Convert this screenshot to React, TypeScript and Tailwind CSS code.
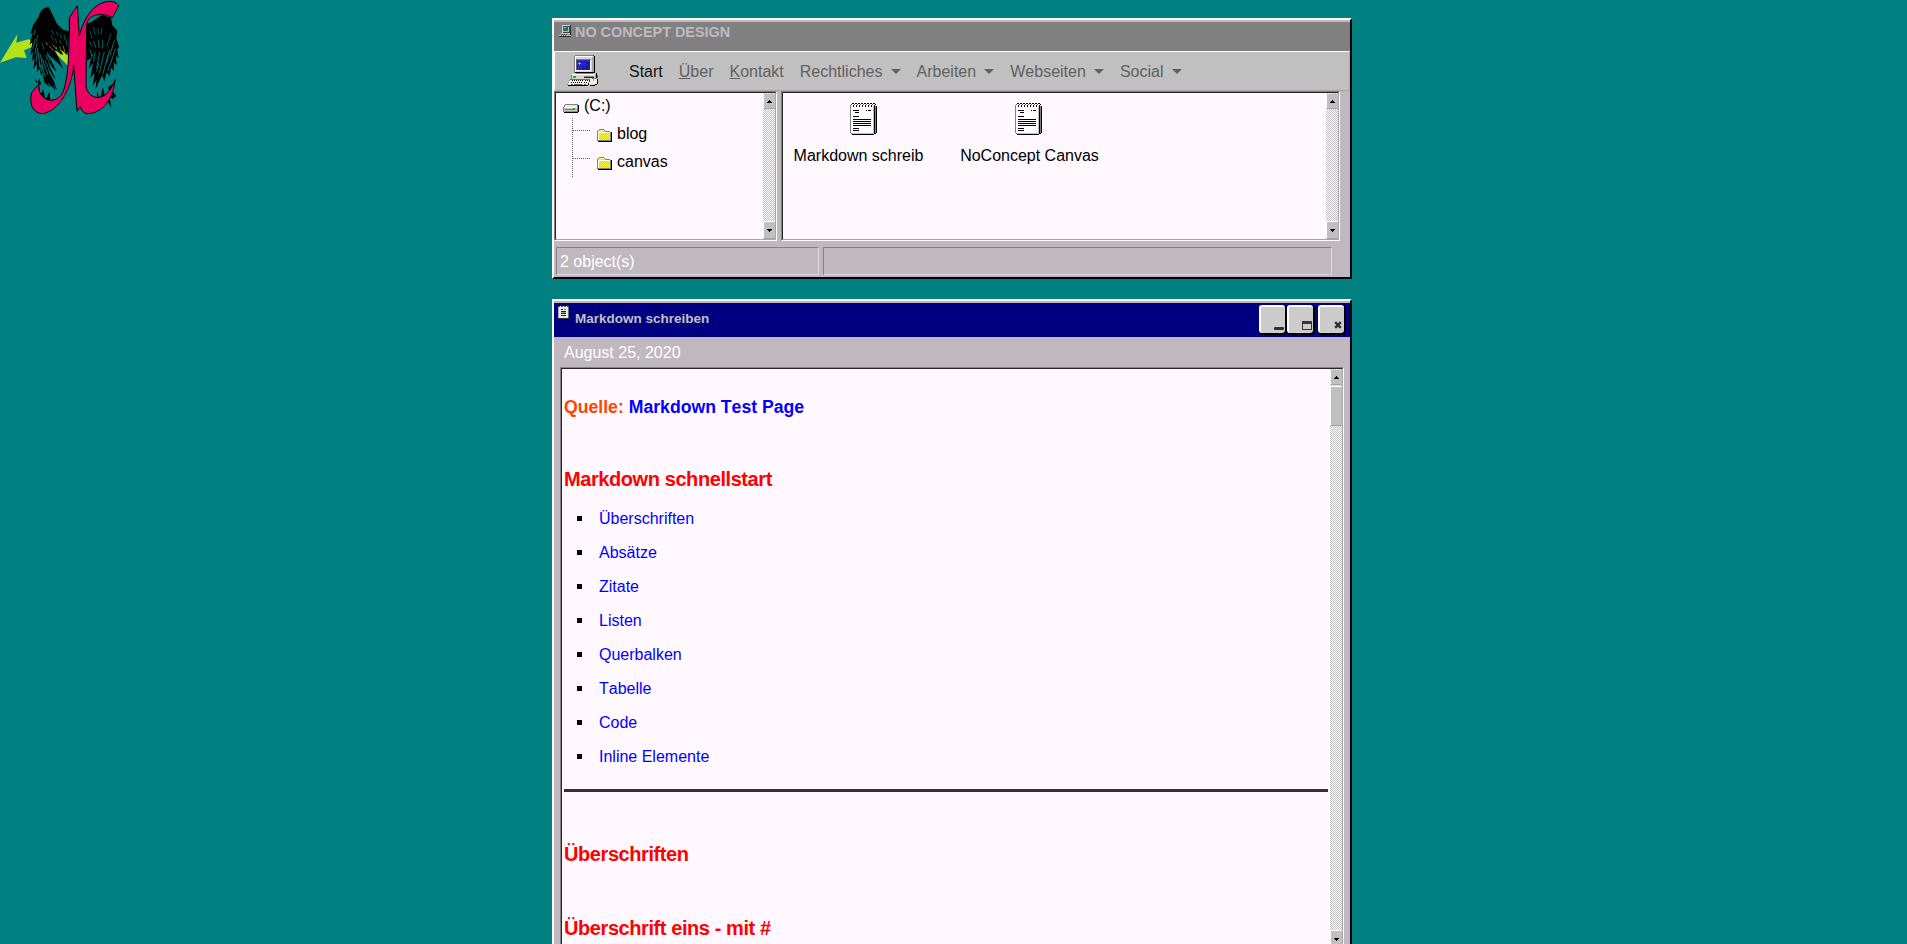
import React from "react";

type Px = [number, number, number, number, string];

function Pixels({ w, h, data, className = "" }: { w: number; h: number; data: Px[]; className?: string }) {
  return (
    <svg width={w} height={h} viewBox={`0 0 ${w} ${h}`} shapeRendering="crispEdges" className={`block shrink-0 ${className}`}>
      {data.map(([x, y, rw, rh, c], i) => (
        <rect key={i} x={x} y={y} width={rw} height={rh} fill={c} />
      ))}
    </svg>
  );
}

const computer: Px[] = [
  [8, 0, 19, 1, "#808080"], [7, 1, 1, 17, "#808080"], [27, 1, 1, 17, "#000"], [26, 0, 1, 1, "#404040"],
  [8, 17, 19, 1, "#000"], [8, 1, 18, 16, "#d8d8c8"], [8, 1, 17, 1, "#fff"], [8, 1, 1, 16, "#fff"],
  [25, 2, 2, 15, "#a8a898"], [9, 4, 15, 1, "#808080"], [9, 4, 1, 11, "#606060"], [10, 5, 13, 10, "#2424cc"],
  [19, 7, 4, 8, "#1c1ca0"], [15, 11, 8, 4, "#1c1ca0"], [10, 15, 14, 1, "#fff"], [23, 5, 1, 11, "#fff"],
  [12, 7, 1, 3, "#4090ff"], [11, 8, 3, 1, "#4090ff"], [12, 8, 1, 1, "#fff"],
  [20, 6, 1, 1, "#2424cc"], [20, 9, 1, 1, "#2424cc"], [17, 12, 1, 1, "#2424cc"], [19, 13, 1, 1, "#2424cc"],
  [9, 18, 17, 1, "#808080"], [5, 19, 24, 1, "#fff"], [5, 20, 25, 4, "#d8d8c8"], [4, 20, 1, 5, "#808080"],
  [6, 21, 3, 2, "#00c820"], [17, 21, 10, 1, "#909088"], [17, 22, 10, 1, "#202020"], [29, 18, 1, 7, "#000"], [28, 19, 1, 5, "#a8a898"],
  [3, 24, 21, 1, "#707068"], [2, 25, 21, 2, "#f0f0e0"], [1, 27, 21, 2, "#f0f0e0"], [0, 29, 21, 1, "#d8d8c8"], [1, 30, 20, 1, "#000"],
  [2, 25, 1, 1, "#808080"], [1, 27, 1, 1, "#808080"], [0, 29, 1, 1, "#808080"], [22, 25, 1, 4, "#303030"], [21, 28, 1, 2, "#000"],
  [5, 25, 1, 1, "#000"], [7, 25, 1, 1, "#000"], [9, 25, 1, 1, "#000"], [11, 25, 1, 1, "#000"], [13, 25, 1, 1, "#000"], [15, 25, 1, 1, "#000"], [18, 25, 1, 1, "#000"], [20, 25, 1, 1, "#000"],
  [4, 27, 1, 1, "#000"], [6, 27, 1, 1, "#000"], [8, 27, 1, 1, "#000"], [10, 27, 1, 1, "#000"], [12, 27, 1, 1, "#000"], [14, 27, 1, 1, "#000"], [17, 27, 1, 1, "#000"], [19, 27, 1, 1, "#000"],
  [4, 29, 2, 1, "#606060"], [7, 29, 8, 1, "#606060"], [17, 29, 2, 1, "#606060"],
  [25, 23, 5, 1, "#808080"], [23, 24, 7, 3, "#f0f0e0"], [22, 27, 8, 2, "#f0f0e0"], [22, 29, 6, 1, "#d8d8c8"],
  [30, 24, 1, 4, "#000"], [30, 28, 1, 1, "#000"], [28, 29, 2, 1, "#000"], [23, 30, 5, 1, "#000"], [26, 24, 1, 2, "#a8a898"], [30, 20, 1, 3, "#606060"],
];

const miniComputer: Px[] = [
  [3, 0, 8, 1, "#c8c8c8"], [3, 1, 1, 7, "#d0d0d0"], [4, 1, 6, 6, "#b8b8b0"], [10, 1, 1, 6, "#505050"], [11, 0, 1, 8, "#303030"],
  [4, 1, 6, 1, "#505858"], [5, 2, 4, 4, "#207070"], [4, 2, 1, 4, "#606868"], [5, 2, 2, 1, "#70a8a8"], [4, 7, 7, 1, "#404040"],
  [2, 8, 9, 1, "#c8c8c0"], [11, 7, 1, 3, "#202020"], [1, 9, 10, 1, "#989890"], [3, 9, 1, 1, "#303030"], [5, 9, 1, 1, "#303030"], [7, 9, 1, 1, "#303030"],
  [0, 10, 9, 1, "#c8c8c0"], [9, 10, 3, 1, "#b0b0a8"], [2, 10, 1, 1, "#505050"], [4, 10, 1, 1, "#505050"], [6, 10, 1, 1, "#505050"], [0, 11, 12, 1, "#303030"],
];

const drive: Px[] = [
  [2, 0, 13, 1, "#808080"], [1, 1, 1, 2, "#808080"], [2, 1, 12, 2, "#e8e8e8"], [0, 3, 1, 5, "#808080"], [1, 3, 13, 1, "#fff"],
  [1, 4, 13, 4, "#c0c0c0"], [14, 1, 1, 7, "#808080"], [15, 1, 1, 7, "#000"], [2, 5, 10, 1, "#808080"], [10, 4, 2, 1, "#00a000"],
  [1, 8, 14, 1, "#000"], [2, 7, 12, 1, "#909090"],
];

const folder: Px[] = [
  [2, 0, 5, 1, "#808080"], [1, 1, 1, 1, "#808080"], [7, 1, 1, 1, "#808080"], [2, 1, 5, 1, "#ffff60"], [0, 2, 1, 10, "#808080"],
  [8, 2, 5, 1, "#808080"], [1, 2, 7, 1, "#e8e840"], [1, 3, 12, 1, "#fff"], [1, 4, 1, 7, "#fff"], [2, 4, 11, 7, "#f2f22c"],
  [13, 3, 1, 9, "#808080"], [14, 3, 1, 9, "#000"], [1, 11, 13, 1, "#808080"], [1, 12, 14, 1, "#000"],
  ...Array.from({ length: 35 }, (_, i): Px => [3 + (i % 5) * 2 - (Math.floor(i / 5) % 2), 4 + Math.floor(i / 5), 1, 1, "#d4d470"]),
];

const notepad: Px[] = [
  [1, 1, 23, 30, "#fff"], [0, 2, 1, 28, "#808080"], [1, 1, 1, 1, "#808080"], [1, 30, 1, 1, "#606060"], [2, 31, 22, 1, "#000"],
  [2, 30, 22, 1, "#c0c0c0"], [23, 3, 1, 27, "#c0c0c0"], [24, 2, 1, 29, "#000"], [25, 3, 1, 27, "#808080"], [26, 3, 1, 27, "#000"], [25, 30, 1, 1, "#000"], [25, 1, 1, 1, "#000"],
  ...Array.from({ length: 8 }, (_, i): Px => [2 + i * 3, 0, 2, 1, "#000"]),
  ...Array.from({ length: 8 }, (_, i): Px => [1 + i * 3, 1, 1, 1, "#606060"]),
  ...Array.from({ length: 7 }, (_, i): Px => [3 + i * 3, 2, 1, 2, "#000"]),
  [3, 7, 6, 1, "#000"], [16, 7, 1, 1, "#000"], [18, 7, 3, 1, "#000"], [5, 9, 4, 1, "#000"], [3, 13, 6, 1, "#000"],
  [3, 16, 18, 1, "#000"], [3, 18, 18, 1, "#000"], [3, 20, 18, 1, "#000"], [3, 22, 18, 1, "#000"], [3, 25, 6, 1, "#000"], [3, 27, 6, 1, "#000"],
];

const miniNotepad: Px[] = [
  [0, 1, 11, 11, "#e8e8e8"], [0, 0, 11, 1, "#505058"], [2, 0, 1, 2, "#fff"], [5, 0, 1, 2, "#fff"], [8, 0, 1, 2, "#fff"],
  [0, 1, 1, 11, "#b0b0b0"], [10, 1, 1, 11, "#707070"], [0, 12, 11, 1, "#303040"],
  [3, 3, 2, 1, "#404040"], [6, 3, 2, 1, "#808080"], [3, 5, 5, 1, "#202020"], [3, 7, 5, 1, "#202020"], [3, 9, 5, 1, "#202020"], [3, 6, 5, 1, "#a0a0a0"],
];

function Logo() {
  return (
    <svg width="130" height="120" viewBox="0 0 390 360" className="pointer-events-none absolute left-0 top-0">
      <defs>
        <filter id="soft"><feGaussianBlur stdDeviation="2" /></filter>
      </defs>
      <path d="M0 188L52 103L49 128L85 118L112 128L200 142L205 195L181 174L155 140L112 135L72 151L80 174L48 172Z" fill="#b5e01f" filter="url(#soft)" />
      <path d="M147 22C132 20 121 32 116 50L99 76L91 102L98 98L89 134L97 127L91 166L99 156L96 184L104 174L100 207L110 192L112 217L118 205L124 229L128 216L139 242L141 228L171 271L160 240L142 208L168 240L145 190L170 216L148 166L174 190L190 207L174 170L163 151L176 157L193 176L184 149L201 165L205 148L207 94L189 89L171 72L158 44Z" />
      <path d="M170 162L203 165L204 198L190 183Z" fill="#b5e01f" />
      <path d="M128 225L134 248L152 263L141 246L168 272L158 252L147 231ZM105 236l9 11l4-12l6 19l-8-4l-8-4zM117 254l4 31l9-18l6 34l12-25l3 25l-20-2l-14-17z" />
      <g stroke="#008080" strokeWidth="2.6" fill="none">
        <path d="M101 105l5-17M98 146l8-30M104 163l7-35M108 187l5-43M119 202l-4-47M130 211l-9-48M144 225l-18-50M156 229l-21-48M157 208l-20-44M160 193l-19-37M137 230l-15-36M125 215l-7-30M151 181l-9-20" />
        <path strokeWidth="2" d="M168 94l7 13M180 101l5 15M192 104l3 16M155 89l6 15M165 115l5 13M179 119l4 12M152 105l8 13M198 118l3 20M113 105l-4 19M126 128l6 21" />
      </g>
      <g stroke="#b5e01f" strokeWidth="1.6" fill="none">
        <path d="M147 138l14 14M157 134l12 13M172 152l-4-12M184 157l-5-18M195 157l-6-20M138 126l5 9" />
      </g>
      <path d="M260 72L275 65L306 45L333 53L337 76L352 92L349 115L357 140L352 150L356 174L348 169L350 196L341 187L342 213L333 203L329 229L320 217L313 244L306 226L286 269L290 239L278 258L284 218L271 235L279 190L266 206L273 174L261 182Z" />
      <path d="M290 270l9 29l10-38l8 40l10-19l7 41l-15-25l-26 6zM325 260l20-12l-8 24l12 16l-12 10l-9-14z" />
      <g stroke="#008080" strokeWidth="2.6" fill="none">
        <path d="M268 125l10 14M280 123l8 20M294 119l4 25M308 121l0 24M269 148l7 20M285 155l-4 30M299 156l-9 48M313 155l-15 64M324 165l-16 59M335 181l-12 32M346 147l-13 39M343 122l-13 43M274 176l5-14M290 215l6-26M329 150l-9 40" />
        <path strokeWidth="2" d="M270 92l6 24M281 80l4 25M294 84l1 20M306 82l-3 22M333 101l-13 40" />
      </g>
      <path d="M208 53L232 17L238 108C251 52 285 4 331 4Q348 4 356 18L337 53C316 40 266 36 260 73L258 255C260 296 316 319 345 239C342 290 311 343 258 341Q247 337 240 320L231 334L221 197C218 240 191 329 128 341C93 338 88 305 95 278L117 251C108 303 176 323 192 267C205 228 206 163 208 102Z" fill="#ea0060" stroke="#000" strokeWidth="3" strokeLinejoin="round" />
    </svg>
  );
}

function ScrollButton({ dir, className = "" }: { dir: "up" | "down"; className?: string }) {
  return (
    <div className={`flex shrink-0 justify-center border-b border-l border-b-[#a4a4a4] border-l-white bg-[#c0c0c0] ${className}`}>
      <svg width="5" height="4" viewBox="0 0 5 4" shapeRendering="crispEdges" className="block">
        {dir === "up" ? (
          <path d="M2 0h1v1h1v1h1v1H0V2h1V1h1z" />
        ) : (
          <path d="M0 0h5v1H4v1H3v1H2V2H1V1H0z" />
        )}
      </svg>
    </div>
  );
}

const track =
  "flex w-3 shrink-0 flex-col bg-[repeating-conic-gradient(#c0c0c0_0_25%,#ffffff_0_50%)] bg-[length:2px_2px]";

function Panel({ className, children }: { className: string; children: React.ReactNode }) {
  return (
    <div className={`border border-b-white border-l-[#848084] border-r-white border-t-[#848084] ${className}`}>
      <div className="flex h-full border border-b-[#a8a4a8] border-l-[#282428] border-r-[#a8a4a8] border-t-[#282428] bg-[#fff8ff]">
        {children}
      </div>
    </div>
  );
}

function SmallScroll() {
  return (
    <div className={track}>
      <ScrollButton dir="up" className="mt-px h-[15px] pt-[6px]" />
      <div className="flex-1" />
      <ScrollButton dir="down" className="h-[18px] border-t border-t-white pt-[7px]" />
    </div>
  );
}

function Menu({ label }: { label: string }) {
  return (
    <span className="flex items-center whitespace-pre px-2">
      {label}
      <span className="ml-[8.1px] mt-[-2px] h-0 w-0 border-x-[5px] border-t-[5px] border-x-transparent border-t-[#606060]" />
    </span>
  );
}

function TreeRow({ label }: { label: string }) {
  return (
    <div className="flex h-7">
      <div className="mt-[12px] h-px w-[18px] bg-[repeating-linear-gradient(90deg,#606060_0_1px,transparent_1px_2px)]" />
      <Pixels w={15} h={13} data={folder} className="ml-[6px] mt-[11px]" />
      <span className="ml-[5px] mt-[4px] leading-6">{label}</span>
    </div>
  );
}

function FileItem({ label, labelClass }: { label: string; labelClass: string }) {
  return (
    <div className="flex w-[165px] flex-col items-center">
      <Pixels w={27} h={32} data={notepad} />
      <span className={`mt-[9px] leading-6 ${labelClass}`}>{label}</span>
    </div>
  );
}

function TitleButton({ className = "", children }: { className?: string; children: React.ReactNode }) {
  return (
    <div className={`flex h-[30px] w-7 rounded-[4px] bg-black pb-[2px] pr-[2px] ${className}`}>
      <div className="flex h-full w-full items-end justify-end rounded-[3px] border-l-2 border-t-2 border-white bg-[#cccccc]">
        {children}
      </div>
    </div>
  );
}

const windowFrame =
  "w-[800px] border-2 border-b-black border-l-white border-r-black border-t-white bg-[#c0b8bf]";

const heading = "text-[20px] font-bold leading-6 tracking-[-0.42px] text-[#ff0000]";

const links = ["Überschriften", "Absätze", "Zitate", "Listen", "Querbalken", "Tabelle", "Code", "Inline Elemente"];

export default function App() {
  return (
    <div className="relative h-[944px] w-full overflow-hidden bg-[#008080] pl-[552px] pt-[18px] font-['Liberation_Sans',Arial,sans-serif] text-base text-black [font-kerning:none]">
      <Logo />

      <section className={`${windowFrame} h-[261px]`}>
        <header className="mt-[2px] flex h-[29px] bg-[#808080]">
          <Pixels w={13} h={12} data={miniComputer} className="ml-[5px] mt-[3px]" />
          <h1 className="ml-[3px] mt-[-2px] text-[14.4px] font-bold leading-6 text-[#c0b8c0]">NO CONCEPT DESIGN</h1>
        </header>
        <nav className="flex h-10 items-center border border-b-[#a8a4a8] border-l-white border-r-[#b0acb0] border-t-white bg-[#c0c0c0] pt-[2px] text-[#606060]">
          <Pixels w={32} h={32} data={computer} className="-mt-[2px] ml-[12px] mr-[22px]" />
          <span className="px-2 text-[#131313]">Start</span>
          <span className="px-2"><u>Ü</u>ber</span>
          <span className="px-2"><u>K</u>ontakt</span>
          <Menu label="Rechtliches" />
          <Menu label="Arbeiten" />
          <Menu label="Webseiten" />
          <Menu label="Social" />
        </nav>
        <div className="flex">
          <Panel className="h-[150px] w-[223px]">
            <div className="flex-1">
              <div className="flex h-[25px]">
                <Pixels w={16} h={9} data={drive} className="ml-[7px] mt-[11px]" />
                <span className="ml-[5px] mt-px leading-6">(C:)</span>
              </div>
              <div className="ml-4 flex h-[60px]">
                <div className="h-full w-px bg-[repeating-linear-gradient(#606060_0_1px,transparent_1px_2px)]" />
                <div>
                  <TreeRow label="blog" />
                  <TreeRow label="canvas" />
                </div>
              </div>
            </div>
            <SmallScroll />
          </Panel>
          <Panel className="ml-[4px] h-[150px] w-[559px]">
            <div className="flex flex-1 pt-[10px]">
              <div className="-ml-[2px] flex">
                <FileItem label="Markdown schreib" labelClass="pr-[10px]" />
                <FileItem label="NoConcept Canvas" labelClass="pl-[2px]" />
              </div>
            </div>
            <SmallScroll />
          </Panel>
        </div>
        <footer className="mt-[6px] flex gap-[4px] pl-[2px] text-white">
          <div className="h-7 w-[263px] border border-b-[#dcd8dc] border-l-[#848084] border-r-[#dcd8dc] border-t-[#848084] pl-[3px] leading-[28px]">
            2 object(s)
          </div>
          <div className="h-7 w-[509px] border border-b-[#dcd8dc] border-l-[#848084] border-r-[#dcd8dc] border-t-[#848084]" />
        </footer>
      </section>

      <section className={`${windowFrame} mt-5 h-[700px]`}>
        <header className="mt-[2px] flex h-[34px] bg-[#000080]">
          <Pixels w={11} h={13} data={miniNotepad} className="ml-[4px] mt-[3px]" />
          <h2 className="ml-[6px] mt-[4px] text-[13.5px] font-bold leading-6 text-[#c0c0c0]">Markdown schreiben</h2>
          <div className="ml-auto mr-[4px] mt-[2px] flex">
            <TitleButton>
              <span className="mb-[3px] mr-px h-[3px] w-[10px] rounded-[1px] bg-[#303030]" />
            </TitleButton>
            <TitleButton>
              <span className="mb-[3px] mr-px h-[9px] w-[10px] border border-t-[3px] border-[#3c3434]" />
            </TitleButton>
            <TitleButton className="ml-[3px]">
              <svg width="8" height="8" viewBox="0 0 8 8" className="mb-[4px] mr-[2px]">
                <path d="M1.2 1.2l5.6 5.6M6.8 1.2L1.2 6.8" stroke="#303030" strokeWidth="2.4" />
              </svg>
            </TitleButton>
          </div>
        </header>
        <div className="h-[30px] pl-[10px] pt-[4px] leading-6 text-white">August 25, 2020</div>
        <Panel className="ml-[6px] h-[640px] w-[784px]">
          <div className="flex-1 pl-[2px] pr-[2px] pt-[26px]">
            <h3 className="text-[17.65px] font-bold leading-6 text-[#ff4500]">
              Quelle: <a className="text-[#0000ff]">Markdown Test Page</a>
            </h3>
            <h2 className={`mt-[48px] ${heading}`}>Markdown schnellstart</h2>
            <ul className="mt-[11px]">
              {links.map((l) => (
                <li key={l} className="flex h-[34px] items-center">
                  <span className="mb-[2px] ml-[13px] mr-[17px] h-[5px] w-[5px] bg-black" />
                  <a className="text-[#0000ff]">{l}</a>
                </li>
              ))}
            </ul>
            <hr className="mt-[15px] h-[3px] border-0 bg-[#333333]" />
            <h2 className={`mt-[50px] ${heading}`}>Überschriften</h2>
            <h2 className={`mt-[50px] ${heading}`}>Überschrift eins - mit #</h2>
          </div>
          <div className={track}>
            <ScrollButton dir="up" className="mt-px h-[15px] pt-[6px]" />
            <div className="mt-px h-10 border border-b-[#a0a0a0] border-l-white border-r-transparent border-t-white bg-[#c0c0c0]" />
            <div className="h-[504px]" />
            <ScrollButton dir="down" className="h-[18px] border-t border-t-white pt-[7px]" />
          </div>
        </Panel>
      </section>
    </div>
  );
}
